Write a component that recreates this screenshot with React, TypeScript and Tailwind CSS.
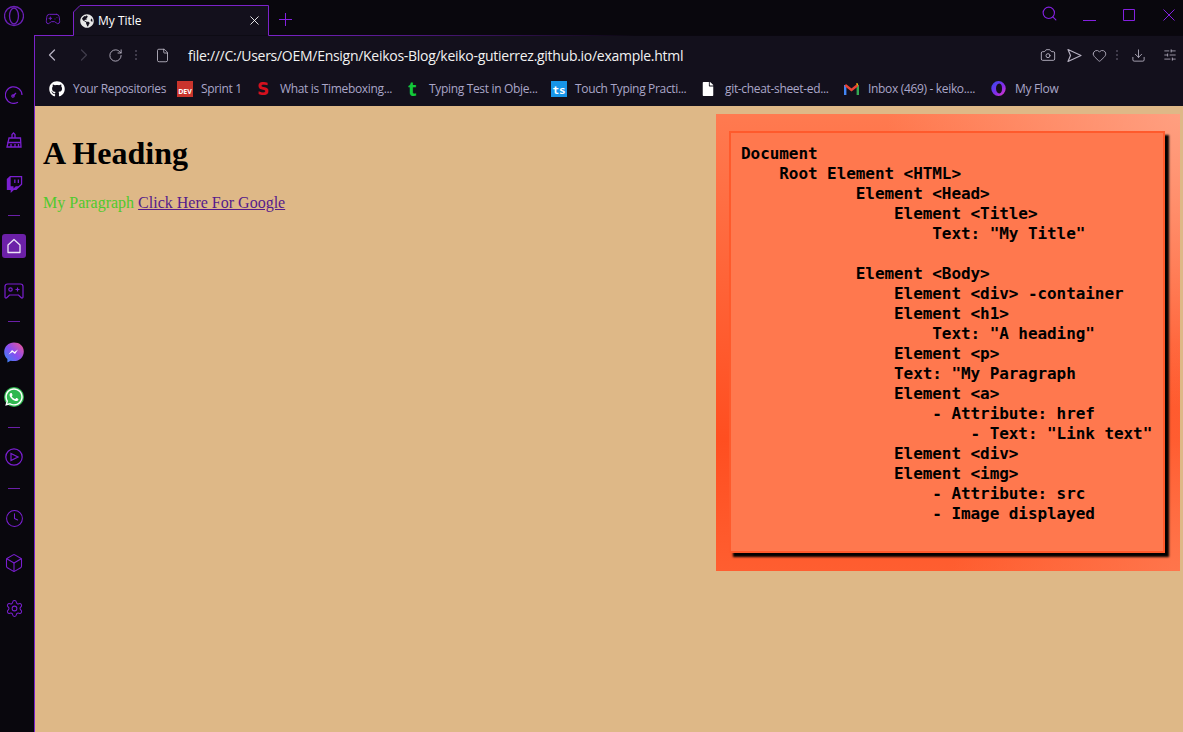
import {
  Box,
  Camera,
  ChevronLeft,
  ChevronRight,
  Clock,
  Download,
  File,
  Gamepad2,
  Heart,
  RotateCw,
  Search,
  Settings,
  SlidersHorizontal,
  X,
} from "lucide-react";
import { FaFile, FaGithub, FaGlobeAmericas, FaWhatsapp } from "react-icons/fa";
import { FaTwitch } from "react-icons/fa6";

const tree = `Document
    Root Element <HTML>
            Element <Head>
                Element <Title>
                    Text: "My Title"

            Element <Body>
                Element <div> -container
                Element <h1>
                    Text: "A heading"
                Element <p>
                Text: "My Paragraph
                Element <a>
                    - Attribute: href
                        - Text: "Link text"
                Element <div>
                Element <img>
                    - Attribute: src
                    - Image displayed`;

const Sep = ({ h }: { h: string }) => (
  <div className={`flex items-center justify-center ${h}`}>
    <div className="w-3 h-px bg-[#6a1fa8]" />
  </div>
);

const Sidebar = () => {
  return (
    <aside className="w-[35px] shrink-0 flex flex-col bg-[#09070d] border-r border-[#7b22c9] text-[#7a1fd0] pr-[6px]">
      <div className="h-[72px] pt-[5px] pl-[4px]">
        <svg width="20" height="22" viewBox="0 0 20 22" fill="none" stroke="#6a1fb5" strokeWidth="1.3">
          <ellipse cx="10" cy="11" rx="9.5" ry="9.5" />
          <ellipse cx="10" cy="11" rx="4.5" ry="8" />
        </svg>
      </div>
      <div className="h-[45px] flex items-center justify-center">
        <svg width="18" height="18" viewBox="0 0 18 18" fill="none" stroke="currentColor" strokeWidth="1.2">
          <path d="M13 16.2A8.3 8.3 0 1 1 17 9" />
          <path d="M8 10l3-3" />
          <circle cx="8" cy="10" r="1.2" />
        </svg>
      </div>
      <div className="h-[45px] flex items-center justify-center">
        <svg width="16" height="16" viewBox="0 0 16 16" fill="none" stroke="currentColor" strokeWidth="1.3">
          <path d="M6 6V2.500L7.500 1 9 2.500V6" />
          <path d="M3 6h11.500l.5 9H1z" />
          <path d="M1.500 10.500h13.500M5 15v-3M9 15v-3M12.500 15v-3" />
        </svg>
      </div>
      <div className="h-[45px] flex items-center justify-center">
        <FaTwitch size={17} />
      </div>
      <Sep h="h-[16px]" />
      <div className="h-[46px] flex items-center justify-center">
        <div className="w-6 h-6 rounded-[3px] bg-[#6c20a8] flex items-center justify-center">
          <svg width="16" height="16" viewBox="0 0 16 16" fill="none" stroke="#ece4f6" strokeWidth="1.3">
            <path d="M2 7l6-5.500L14 7v7.500H2z" strokeLinejoin="round" />
          </svg>
        </div>
      </div>
      <div className="h-[44px] flex items-center justify-center">
        <svg width="20" height="16" viewBox="0 0 20 16" fill="none" stroke="currentColor" strokeWidth="1.2">
          <path d="M3.500 1h13C18 1 19 2 19 3.500V14c0 1-1 1.500-2 .5L14.500 12h-9L3 14.500c-1 1-2 .5-2-.5V3.500C1 2 2 1 3.500 1z" />
          <circle cx="6.500" cy="6.500" r="1.700" />
          <path d="M11.500 6.500h4M13.500 4.500v4" />
        </svg>
      </div>
      <Sep h="h-[16px]" />
      <div className="h-[46px] flex items-center justify-center">
        <svg width="20" height="21" viewBox="0 0 20 21">
          <defs>
            <linearGradient id="msg" x1="0" y1="1" x2="1" y2="0">
              <stop offset="0" stopColor="#2a8cf5" />
              <stop offset="0.5" stopColor="#8b4cf0" />
              <stop offset="1" stopColor="#f5588c" />
            </linearGradient>
          </defs>
          <path d="M10 0.500C4.500 0.500 0.200 4.500 0.200 10c0 3 1.200 5.400 3.200 7v3.500l3.200-1.800c1 .3 2.200.4 3.400.4 5.500 0 9.800-4 9.800-9.600S15.500.5 10 .5z" fill="url(#msg)" />
          <path d="M4.500 12.500l3.500-4.500 2.500 2 3.500-2.500-3 4.500-2.500-2z" fill="#fff" />
        </svg>
      </div>
      <div className="h-[44px] flex items-center justify-center">
        <div className="w-[20px] h-[20px] rounded-full bg-[#2fb84f] flex items-center justify-center text-white">
          <FaWhatsapp size={20} />
        </div>
      </div>
      <Sep h="h-[16px]" />
      <div className="h-[44px] flex items-center justify-center">
        <svg width="18" height="18" viewBox="0 0 18 18" fill="none" stroke="currentColor" strokeWidth="1.2">
          <circle cx="9" cy="9" r="8.200" />
          <path d="M6 5.500l7 3.500-7 3.500z" />
        </svg>
      </div>
      <Sep h="h-[18px]" />
      <div className="h-[43px] flex items-center justify-center">
        <Clock size={19} strokeWidth={1.3} />
      </div>
      <div className="h-[46px] flex items-center justify-center">
        <Box size={20} strokeWidth={1.3} />
      </div>
      <div className="h-[45px] flex items-center justify-center">
        <Settings size={19} strokeWidth={1.3} />
      </div>
    </aside>
  );
};

const TitleBar = () => {
  return (
    <div className="h-[36px] flex bg-[#09070d] -ml-px">
      <div className="w-[39px] shrink-0 flex flex-col">
        <div className="flex-1 flex items-center justify-end pr-[12px] pt-[2px] text-[#6d1fc0]">
          <Gamepad2 size={16} strokeWidth={1.5} />
        </div>
        <div className="h-px bg-[#7b22c9]" />
      </div>
      <div className="w-[197px] shrink-0 h-[36px] relative">
        <svg className="absolute inset-0" width="197" height="36" viewBox="0 0 197 36" fill="none">
          <path d="M0 35.500H0.500V12L7 5.500H195.500V35.500H197" fill="#13101c" stroke="#7b22c9" />
        </svg>
        <div className="relative h-full flex items-center pl-[7px] pr-[8px] pt-[5px] text-white">
          <FaGlobeAmericas size={14} className="text-[#e8e8e8]" />
          <span className="ml-[4px] text-[12px] flex-1">My Title</span>
          <X size={15} strokeWidth={1.4} />
        </div>
      </div>
      <div className="flex-1 flex flex-col">
        <div className="flex-1 flex items-start text-[#8420e0]">
          <svg width="13" height="13" viewBox="0 0 13 13" fill="none" stroke="currentColor" className="ml-[9px] mt-[13px]">
            <path d="M0 6.500H13M6.500 0V13" />
          </svg>
          <Search size={17} strokeWidth={1.6} className="ml-auto mt-[5px]" />
          <svg width="13" height="13" viewBox="0 0 13 13" fill="none" stroke="currentColor" className="ml-[25px] mt-[9px]">
            <path d="M0 11.500H13" />
          </svg>
          <svg width="12" height="12" viewBox="0 0 12 12" fill="none" stroke="currentColor" className="ml-[27px] mt-[9px]">
            <path d="M0.500 0.500H11.500V11.500H0.500z" />
          </svg>
          <svg width="12" height="12" viewBox="0 0 12 12" fill="none" stroke="currentColor" className="ml-[28px] mt-[9px] mr-[8px]">
            <path d="M0.500 0.500L11.500 11.500M11.500 0.500L0.500 11.500" />
          </svg>
        </div>
        <div className="h-px bg-[linear-gradient(to_right,#7b22c9,#0a070f_40%)]" />
      </div>
    </div>
  );
};

const Toolbar = () => {
  return (
    <div className="h-[38px] flex items-center bg-[#13101c] text-[#b5b0c0] pl-[7px] pr-[6px]">
      <ChevronLeft size={20} strokeWidth={1.5} />
      <ChevronRight size={20} strokeWidth={1.5} className="ml-[12px] text-[#3f3b4a]" />
      <RotateCw size={15} strokeWidth={1.5} className="ml-[14px]" />
      <div className="ml-[12px] w-[2px] h-[10px] border-l-2 border-dotted border-[#3f3b4a]" />
      <File size={15} strokeWidth={1.3} className="ml-[18px] text-[#c8c4d2]" />
      <span className="ml-[18px] text-[14px] text-[#f2f2f2] tracking-[-0.28px]">
        file:///C:/Users/OEM/Ensign/Keikos-Blog/keiko-gutierrez.github.io/example.html
      </span>
      <Camera size={16} strokeWidth={1.4} className="ml-auto" />
      <svg width="15" height="15" viewBox="0 0 15 15" fill="none" stroke="currentColor" strokeWidth="1.2" className="ml-[11px]">
        <path d="M1 1.500L14 7.500 1 13.500 3.500 7.500z" strokeLinejoin="round" />
      </svg>
      <Heart size={15} strokeWidth={1.4} className="ml-[10px]" />
      <div className="ml-[9px] w-[2px] h-[10px] border-l-2 border-dotted border-[#3f3b4a]" />
      <Download size={15} strokeWidth={1.4} className="ml-[13px]" />
      <SlidersHorizontal size={14} strokeWidth={1.4} className="ml-[17px]" />
    </div>
  );
};

const Bookmark = ({ w, icon, label }: { w: string; icon: React.ReactNode; label: string }) => (
  <div className={`flex items-center h-full shrink-0 ${w}`}>
    <div className="w-[24px] shrink-0 flex items-center">{icon}</div>
    <span className="text-[12px] text-[#aaa6c8] whitespace-nowrap tracking-[-0.33px]">{label}</span>
  </div>
);

const Bookmarks = () => {
  return (
    <div className="h-[32px] flex items-center bg-[#13101c] pl-[14px] pb-[3px]">
      <Bookmark w="w-[128px]" label="Your Repositories" icon={<FaGithub size={16} className="text-white" />} />
      <Bookmark
        w="w-[79px]"
        label="Sprint 1"
        icon={
          <div className="w-4 h-4 bg-[#c9342c] flex items-end justify-center text-[7px] leading-[10px] font-bold text-white">
            DEV
          </div>
        }
      />
      <Bookmark
        w="w-[149px]"
        label="What is Timeboxing..."
        icon={<span className="font-['DejaVu_Sans'] font-bold text-[17px] leading-4 text-[#d5101e] pl-[1px]">S</span>}
      />
      <Bookmark
        w="w-[146px]"
        label="Typing Test in Obje..."
        icon={<span className="text-[20px] leading-4 font-bold text-[#12c83a] pl-[3px]">t</span>}
      />
      <Bookmark
        w="w-[150px]"
        label="Touch Typing Practi..."
        icon={
          <div className="w-4 h-4 bg-[#1795e8] flex items-end justify-center text-[11px] leading-[13px] font-bold text-white font-['DejaVu_Sans_Mono']">
            ts
          </div>
        }
      />
      <Bookmark w="w-[143px]" label="git-cheat-sheet-ed..." icon={<FaFile size={14} className="text-white" />} />
      <Bookmark
        w="w-[147px]"
        label="Inbox (469) - keiko...."
        icon={
          <svg width="15" height="12" viewBox="0 0 15 12" fill="none">
            <path d="M1.200 12V2" stroke="#4285f4" strokeWidth="2.400" />
            <path d="M13.800 12V2" stroke="#34a853" strokeWidth="2.400" />
            <path d="M1.200 2l6.300 5 6.300-5" stroke="#ea4335" strokeWidth="2.400" />
            <path d="M12.600 1.500l1.200-.5" stroke="#fbbc04" strokeWidth="2.400" />
          </svg>
        }
      />
      <Bookmark
        w="w-[90px]"
        label="My Flow"
        icon={
          <svg width="15" height="15" viewBox="0 0 15 15">
            <defs>
              <linearGradient id="flow" x1="0" y1="0" x2="1" y2="1">
                <stop offset="0" stopColor="#2d4bf0" />
                <stop offset="0.6" stopColor="#8a2be8" />
                <stop offset="1" stopColor="#ee3cc0" />
              </linearGradient>
            </defs>
            <path d="M7.500 0a7.200 7.500 0 1 0 0 15 7.200 7.500 0 1 0 0-15zm.8 2.500c2 0 2.700 2.300 2.700 5s-.8 5-2.700 5-3.300-2.300-3.300-5 1.300-5 3.300-5z" fill="url(#flow)" fillRule="evenodd" />
          </svg>
        }
      />
    </div>
  );
};

const Page = () => {
  return (
    <main className="flex-1 flex items-start justify-between bg-[#deb887] font-['Liberation_Serif',serif] text-black">
      <div className="pl-[8px]">
        <h1 className="mt-[28.5px] text-[32px] leading-[37px] font-bold">A Heading</h1>
        <p className="mt-[22px] text-[16px] leading-[18px]">
          <span className="text-[#4fc92e]">My Paragraph</span>{" "}
          <a className="text-[#551a8b] underline">Click Here For Google</a>
        </p>
      </div>
      <div className="mt-[8px] mr-[3px] w-[464px] h-[457px] pt-[17px] pl-[13px] bg-[radial-gradient(circle_at_100%_0%,#ffa88ccc,transparent_45%),radial-gradient(circle_at_100%_100%,#ff8058b0,transparent_35%),linear-gradient(180deg,#ff7a50,#ff4e20_71%,#ff5e30)]">
        <div className="w-[436px] h-[422px] border-2 border-[#ff5a2c] bg-[#ff784e] shadow-[4px_4px_2px_#000] pl-[10px] pt-[11px]">
          <pre className="font-['DejaVu_Sans_Mono',monospace] font-bold text-[16px] leading-[20px] tracking-[-0.07px] text-black">
            {tree}
          </pre>
        </div>
      </div>
    </main>
  );
};

export default function App() {
  return (
    <div className="w-[1183px] h-[732px] flex overflow-hidden font-['Open_Sans',sans-serif]">
      <Sidebar />
      <div className="flex-1 flex flex-col min-w-0">
        <TitleBar />
        <Toolbar />
        <Bookmarks />
        <Page />
      </div>
    </div>
  );
}
